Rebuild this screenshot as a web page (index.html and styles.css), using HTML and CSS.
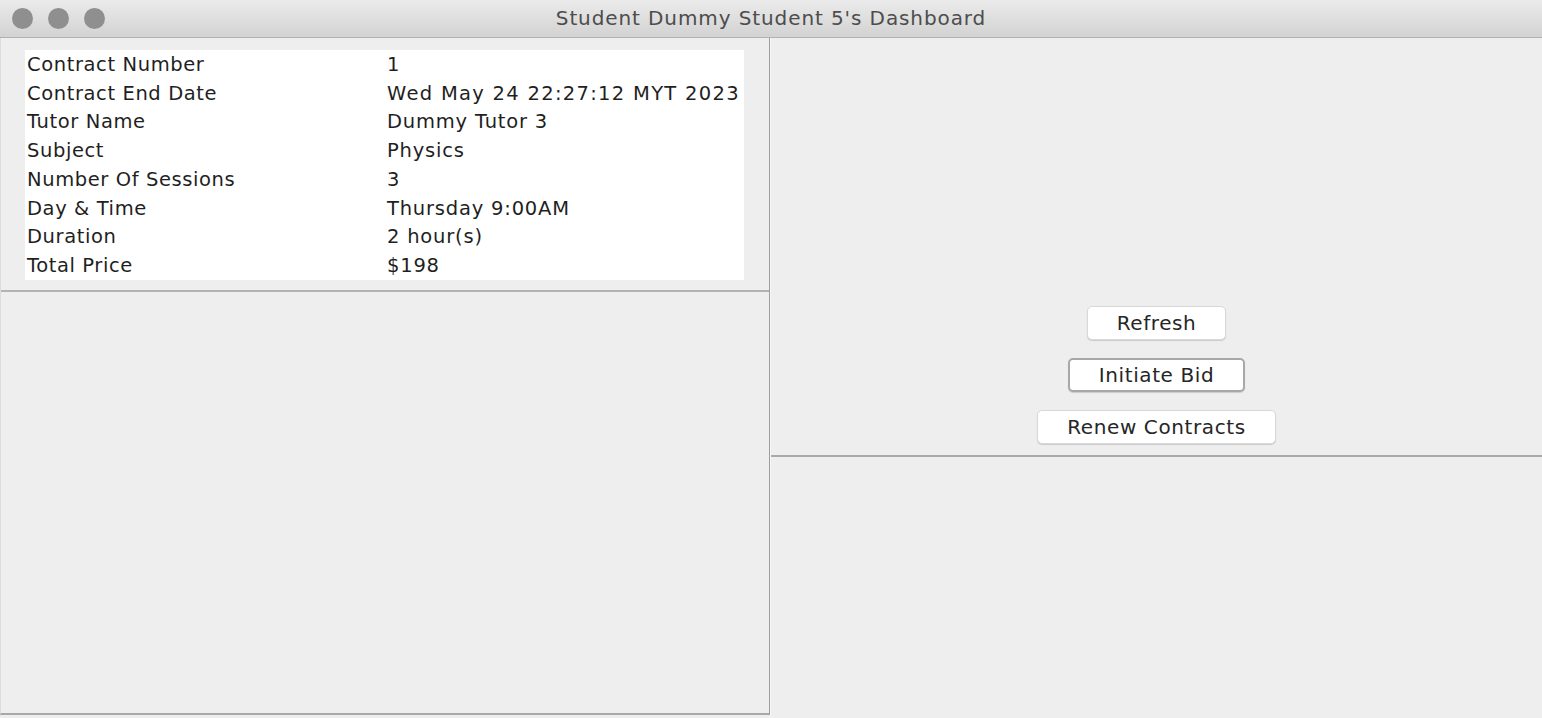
FILE: index.html
```html
<!DOCTYPE html>
<html>
<head>
<meta charset="utf-8">
<link rel="stylesheet" href="styles.css">
</head>
<body>
<div class="window">
  <div class="titlebar">
    <div class="lights"><span class="light"></span><span class="light"></span><span class="light"></span></div>
    <div class="title">Student Dummy Student 5's Dashboard</div>
  </div>
  <div class="main">
    <div class="left">
      <div class="left-top">
        <table class="info">
          <tr><td class="k">Contract Number</td><td class="v">1</td></tr>
          <tr><td class="k">Contract End Date</td><td class="v num">Wed May 24 22:27:12 MYT 2023</td></tr>
          <tr><td class="k">Tutor Name</td><td class="v">Dummy Tutor 3</td></tr>
          <tr><td class="k">Subject</td><td class="v">Physics</td></tr>
          <tr><td class="k">Number Of Sessions</td><td class="v">3</td></tr>
          <tr><td class="k">Day &amp; Time</td><td class="v">Thursday 9:00AM</td></tr>
          <tr><td class="k">Duration</td><td class="v">2 hour(s)</td></tr>
          <tr><td class="k">Total Price</td><td class="v">$198</td></tr>
        </table>
      </div>
      <div class="left-bottom"></div>
    </div>
    <div class="right">
      <div class="right-top">
        <button class="btn">Refresh</button>
        <button class="btn focused">Initiate Bid</button>
        <button class="btn">Renew Contracts</button>
      </div>
      <div class="right-bottom"></div>
    </div>
  </div>
</div>
</body>
</html>
```

FILE: styles.css
```css
html, body {
  margin: 0;
  padding: 0;
  background: #ececec;
}
.window {
  width: 1542px;
  height: 718px;
  display: flex;
  flex-direction: column;
  font-family: "DejaVu Sans", "Liberation Sans", sans-serif;
  overflow: hidden;
}
.titlebar {
  height: 37px;
  flex: none;
  background: linear-gradient(#ebebeb, #d2d2d2);
  border-bottom: 1px solid #b1b1b1;
  display: flex;
  align-items: center;
  position: relative;
}
.lights {
  display: flex;
  gap: 15px;
  padding-left: 12px;
}
.light {
  width: 21px;
  height: 21px;
  border-radius: 50%;
  background: #8f8f8f;
}
.title {
  position: absolute;
  left: 0;
  right: 0;
  top: 0;
  line-height: 37px;
  text-align: center;
  font-size: 20px;
  letter-spacing: 0.9px;
  color: #4d4d4d;
}
.main {
  flex: 1;
  display: flex;
  background: #eeeeee;
}
.left {
  width: 768px;
  flex: none;
  border-left: 1px solid #dcdcdc;
  border-right: 1px solid #9d9d9d;
  border-bottom: 2px solid #a8a8a8;
  height: 675px;
  display: flex;
  flex-direction: column;
}
.left-top {
  height: 240px;
  padding: 12px 0 0 24px;
  border-bottom: 2px solid #b3b3b3;
  box-sizing: content-box;
}
.info {
  background: #ffffff;
  width: 719px;
  border-collapse: collapse;
  font-size: 19.5px;
  letter-spacing: 0.6px;
  color: #1f1f1f;
}
.info td {
  height: 28.75px;
  padding: 0 0 0 2px;
  white-space: nowrap;
  vertical-align: middle;
}
.info td.k {
  width: 358px;
}
.info td.v {
  letter-spacing: 0.8px;
}
.info td.v.num {
  letter-spacing: 1.3px;
}
.right {
  flex: 1;
  border-left: 1px solid #f7f7f7;
  display: flex;
  flex-direction: column;
}
.right-top {
  height: 419px;
  border-bottom: 2px solid #a9a9a9;
  display: flex;
  flex-direction: column;
  align-items: center;
  box-sizing: border-box;
  gap: 18px;
  padding-top: 268px;
}
.btn {
  font-family: "DejaVu Sans", "Liberation Sans", sans-serif;
  font-size: 20px;
  letter-spacing: 0.6px;
  color: #262626;
  background: #ffffff;
  border: 1px solid #d8d8d8;
  border-radius: 5px;
  box-shadow: 0 1px 1px rgba(0,0,0,0.15);
  height: 34px;
  padding: 0 29px;
  margin: 0;
}
.btn.focused {
  border: 2px solid #a8a8a8;
}
.right-bottom {
  flex: 1;
}
```
